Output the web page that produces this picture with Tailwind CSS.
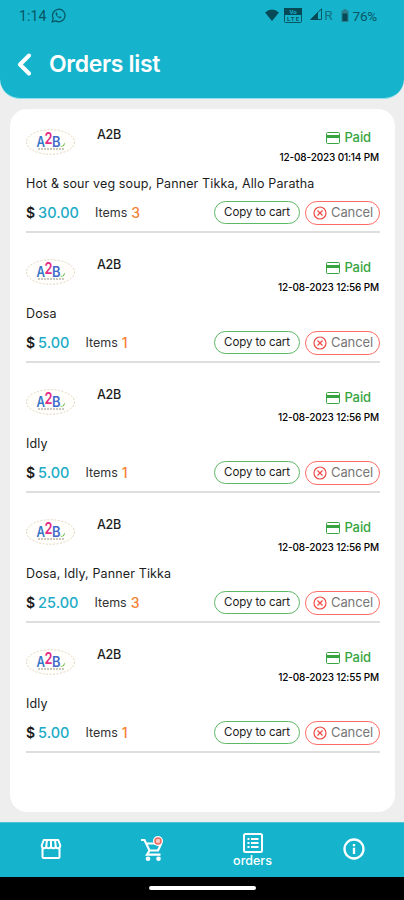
<!DOCTYPE html>
<html lang="en">
<head>
<meta charset="utf-8">
<title>Orders list</title>
<script src="https://cdn.jsdelivr.net/npm/@tailwindcss/browser@4"></script>
</head>
<body class="w-[404px] h-[900px] overflow-hidden bg-[#eeeeee] font-['Inter',sans-serif] text-[#1c1c1c]">
<div class="flex flex-col h-[900px]">
  <header class="h-[99px] shrink-0 rounded-b-[20px] bg-[#16b4cc] border-b border-[#8fe0ec]">
    <div class="flex items-center h-8 pl-[19px] pr-[27px] text-[#075563] font-[Roboto,sans-serif] text-[14px]">
      <span class="tracking-[0.1px]">1:14</span>
      <svg class="ml-[5px] -mt-[2px]" width="15" height="15" viewBox="0 0 24 24" fill="none" stroke="currentColor" stroke-width="2"><path d="M2 22l1.600-5.400A10 10 0 1 1 7.400 20.600z"/><path d="M8 7c-1 1-1 2.500 0 4.200 1.300 2.400 3 4 5.500 5 1.500.5 3-.3 3.200-1.800l-2.500-1.300-1.200 1.400c-1.700-.8-2.800-2-3.500-3.500l1-1.200L9.400 7z" fill="currentColor" stroke="none"/></svg>
      <svg class="ml-auto -mt-[3px]" width="14" height="12" viewBox="0 0 14 12" fill="#064a57"><path d="M0 3.500Q7-2.500 14 3.500L7 12z"/></svg>
      <svg class="ml-[5px] -mt-[2px]" width="18" height="15" viewBox="0 0 18 15"><rect x=".5" y=".5" width="17" height="14" rx="1" fill="none" stroke="#075563"/><path d="M0 0h18v7H0z" fill="#064a57"/><text x="9" y="6" font-size="6" font-weight="700" text-anchor="middle" fill="#16b4cc">Vo</text><text x="9" y="13.200" font-size="6" font-weight="700" text-anchor="middle" fill="#075563" textLength="12">LTE</text></svg>
      <svg class="ml-2 -mt-[4px]" width="12" height="12" viewBox="0 0 12 12"><path d="M.8 11.500L11.500.8v10.700z" fill="none" stroke="#075563"/><path d="M0 12L8 4v8z" fill="#064a57"/></svg>
      <span class="ml-[2px] -mt-[2px] text-[13.500px] text-[#12707f]">R</span>
      <svg class="ml-[8px] -mt-[2px]" width="8" height="13" viewBox="0 0 8 13"><path d="M2.500 0h3v1.500H7.500V13H.5V1.500h2z" fill="#2a7f8d"/><path d="M1.500 4.500h5V12h-5z" fill="#064a57"/></svg>
      <span class="ml-[4px] text-[13.500px] tracking-[-0.2px]">76%</span>
    </div>
    <div class="flex items-center h-16 pl-[17px] text-white">
      <svg width="15" height="23" viewBox="0 0 15 23" fill="none" stroke="currentColor" stroke-width="4" stroke-linecap="round" stroke-linejoin="round"><path d="M12 2.500L3 11.500l9 9"/></svg>
      <h1 class="ml-[17px] text-[23px] font-semibold tracking-[-0.33px] leading-none whitespace-nowrap">Orders list</h1>
    </div>
  </header>

  <main class="mt-[10px] ml-[10px] mr-[9px] h-[703px] shrink-0 rounded-[17px] bg-white pl-4 pr-[15px]">
    <ul id="orders"></ul>
  </main>

  <nav class="mt-[10px] h-[55px] shrink-0 grid grid-cols-4 bg-[#16b4cc] border-t border-[#4cc2d4] text-white">
    <div class="flex items-center justify-center pb-[2px]"><svg width="22" height="22" viewBox="0 0 22 22" fill="none" stroke="currentColor" stroke-width="2" stroke-linejoin="round"><path d="M3.700 2h14.600l2 5.500c0 1.700-1 2.700-2.300 2.700s-2.300-1-2.300-2.300c0 1.300-1 2.300-2.300 2.300S11 9.200 11 7.900c0 1.300-1 2.300-2.400 2.300s-2.300-1-2.300-2.300c0 1.300-1 2.300-2.300 2.300S1.700 9.200 1.700 7.500zM2.500 10.500v8.500q0 1 1 1h15q1 0 1-1v-8.500M11 2v6M7 2l-.7 6M15 2l.7 6"/></svg></div>
    <div class="flex items-center justify-center pb-[3px]"><svg width="24" height="26" viewBox="0 0 24 26" fill="none" stroke="currentColor" stroke-width="2.200"><path d="M1 4h3.500l5 10.500h8.500L21 8M6 7.500h10M9.500 14.500L7 18.700h13.500"/><circle cx="8" cy="22.700" r="2.300" fill="currentColor" stroke="none"/><circle cx="18.500" cy="22.700" r="2.300" fill="currentColor" stroke="none"/><circle cx="18" cy="5" r="5" fill="currentColor" stroke="none"/><circle cx="18" cy="5" r="3" fill="#ffc7c3" stroke="#f0675f" stroke-width="1.500"/></svg></div>
    <div class="flex flex-col items-center pt-[10px]"><svg width="20" height="20" viewBox="0 0 20 20" fill="none" stroke="currentColor" stroke-width="2"><rect x="1" y="1" width="18" height="18" rx="1.500"/><path d="M4.500 6h2M4.500 10h2M4.500 14h2M8 6h7.500M8 10h7.500M8 14h7.500"/></svg><span class="text-[12.500px] leading-[16px] font-medium">orders</span></div>
    <div class="flex items-center justify-center pb-[2px]"><svg width="22" height="22" viewBox="0 0 22 22" fill="none" stroke="currentColor" stroke-width="2.300"><circle cx="11" cy="11" r="9.500"/><path d="M11 9.800v6.200M11 6v2.200"/></svg></div>
  </nav>
  <footer class="h-[23px] shrink-0 bg-black flex justify-center pt-[9px]"><div class="w-[107px] h-1 rounded-full bg-white"></div></footer>
</div>

<template id="order">
  <li class="h-[130px] first:h-[124px] flex flex-col justify-end border-b-2 border-[#dedede]">
    <div class="flex h-[38px]">
      <svg class="mt-[3px]" width="49" height="26" viewBox="0 0 49 26"><ellipse cx="24.500" cy="13" rx="24" ry="12.300" fill="#fffefb" stroke="#d9cbb0" stroke-width=".8" stroke-dasharray="2 1.500"/><g font-family="Inter" font-weight="600"><text x="10.500" y="17.800" font-size="14" fill="#3477c8" textLength="8.500" lengthAdjust="spacingAndGlyphs">A</text><text x="18.500" y="14.500" font-size="16" fill="#e52d85" textLength="8" lengthAdjust="spacingAndGlyphs">2</text><text x="26" y="17.800" font-size="14" fill="#4169c9" textLength="8.500" lengthAdjust="spacingAndGlyphs">B</text></g><path d="M34.500 16l1.500 1.500L39 13.500q0 4-4 4.500z" fill="#6abb45"/><path d="M12 20h26" stroke="#b7b7ad" stroke-width="1.300" stroke-dasharray="2 1"/></svg>
      <span class="ml-[22px] mt-[1px] text-[12.500px] leading-[16px] font-medium tracking-[-0.3px]">A2B</span>
      <div class="ml-auto flex flex-col items-end">
        <div class="mt-[2px] mr-[9px] flex items-center h-[18px] gap-[4px] text-[#36a541]"><svg class="mt-[1px]" width="14" height="12" viewBox="0 0 14 12"><rect x=".5" y=".5" width="13" height="11" rx="1" fill="none" stroke="currentColor"/><path d="M0 3h14v3H0z" fill="currentColor"/></svg><span class="text-[13px] font-medium leading-none tracking-[-0.1px]">Paid</span></div>
        <time class="mt-[4px] mr-[1px] text-[10px] leading-[14px] font-medium tracking-[-0.15px] text-black whitespace-nowrap"></time>
      </div>
    </div>
    <p class="mt-[10px] h-[20px] text-[12.500px] leading-[20px] tracking-[0.13px] whitespace-nowrap"></p>
    <div class="mt-[7px] mb-[7px] flex items-center h-[23px]">
      <span class="text-[14px] font-semibold">$</span><b class="ml-[3px] text-[14.500px] font-medium text-[#20abc6]"></b>
      <span class="ml-[16px] mt-[2px] text-[12.500px] text-[#333333]">Items</span><i class="ml-1 not-italic text-[14px] font-medium text-[#f58232]"></i>
      <button class="ml-auto h-[23px] w-[86px] rounded-full border border-[#5cb866] text-[11.500px] leading-none whitespace-nowrap tracking-[-0.1px]">Copy to cart</button>
      <button class="ml-[5px] h-[24px] w-[75px] rounded-full border border-[#ff6b66] flex items-center pl-[7px] gap-[4px] text-[13px] text-[#777777] leading-none tracking-[-0.1px]"><svg class="shrink-0" width="14" height="14" viewBox="0 0 14 14" fill="none" stroke="#f04b45" stroke-width="1.200"><circle cx="7" cy="7" r="6"/><path d="M4.500 4.500l5 5m0-5l-5 5"/></svg><span>Cancel</span></button>
    </div>
  </li>
</template>
<script>
const orders = [
  ["12-08-2023 01:14 PM", "Hot & sour veg soup, Panner Tikka, Allo Paratha", "30.00", "3"],
  ["12-08-2023 12:56 PM", "Dosa", "5.00", "1"],
  ["12-08-2023 12:56 PM", "Idly", "5.00", "1"],
  ["12-08-2023 12:56 PM", "Dosa, Idly, Panner Tikka", "25.00", "3"],
  ["12-08-2023 12:55 PM", "Idly", "5.00", "1"]
];
const tpl = document.getElementById("order");
for (const [time, dishes, price, count] of orders) {
  const row = tpl.content.cloneNode(true);
  row.querySelector("time").textContent = time;
  row.querySelector("p").textContent = dishes;
  row.querySelector("b").textContent = price;
  row.querySelector("i").textContent = count;
  document.getElementById("orders").append(row);
}
</script>
</body>
</html>
